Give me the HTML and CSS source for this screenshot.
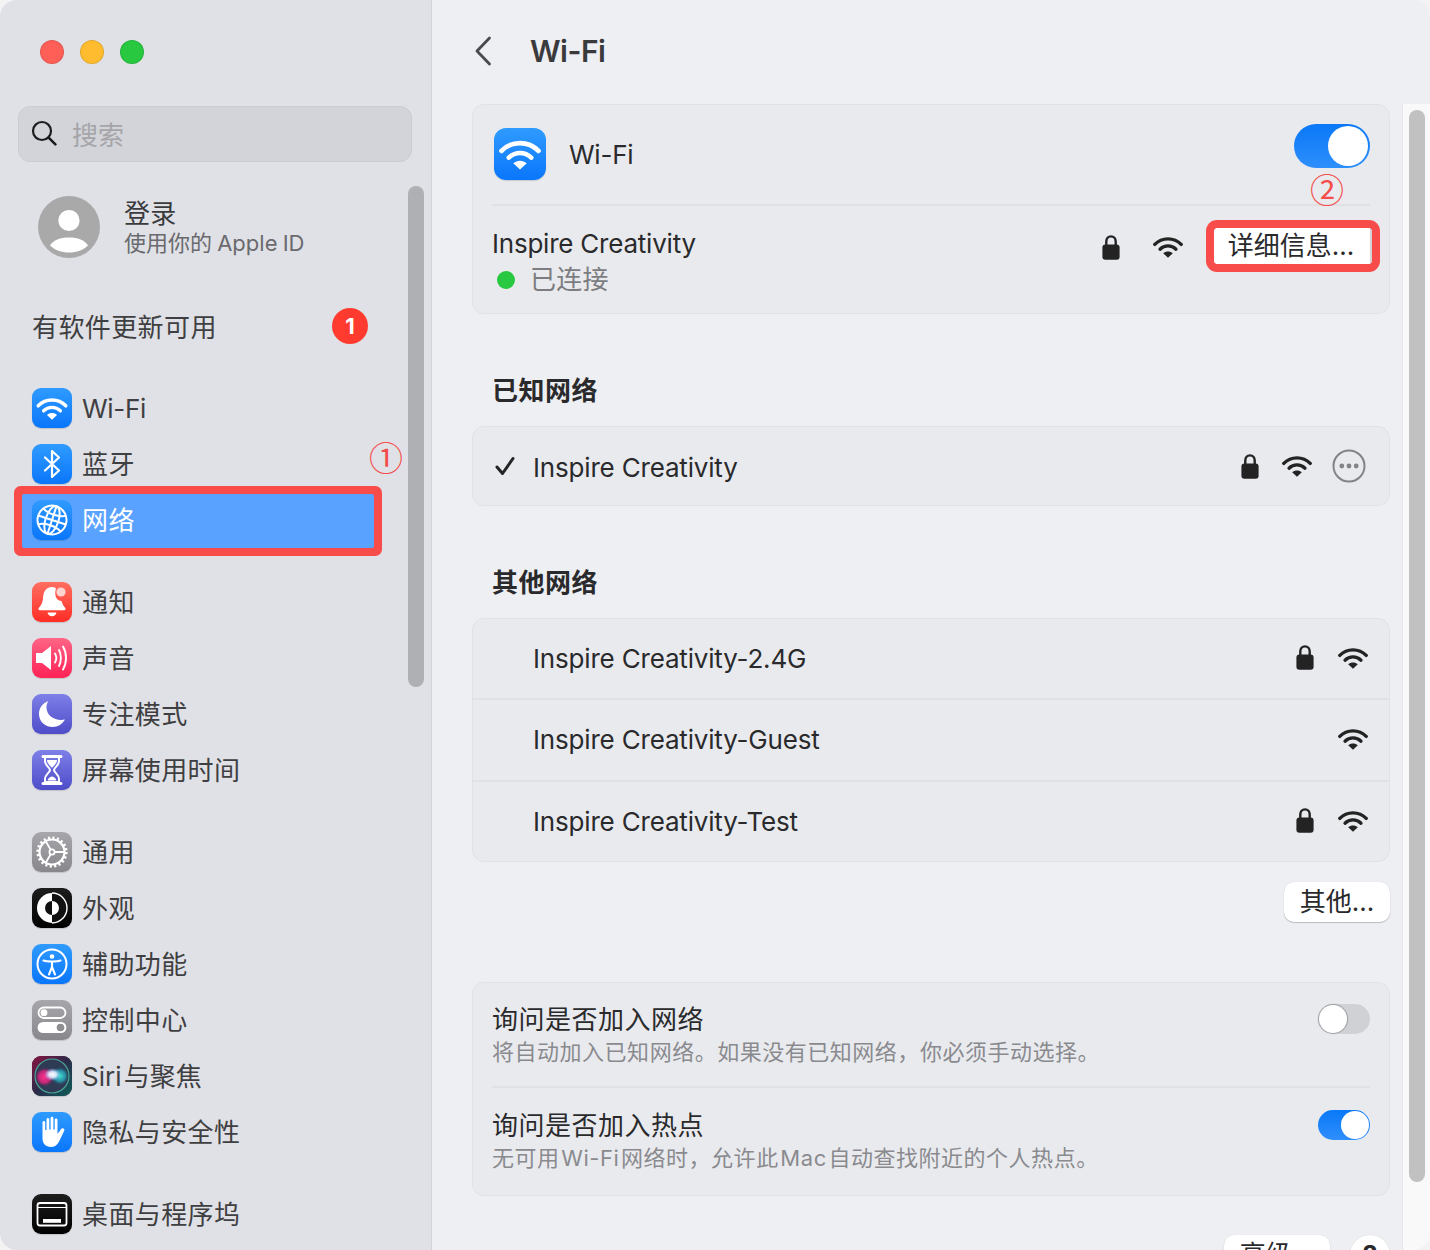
FILE: index.html
```html
<!DOCTYPE html>
<html lang="zh-CN">
<head>
<meta charset="utf-8">
<title>Wi-Fi</title>
<link rel="stylesheet" href="styles.css">
</head>
<body>
<svg class="defs" width="0" height="0" aria-hidden="true">
  <defs>
    <symbol id="wifi" viewBox="0 0 30 22">
      <path d="M1.8 8.4C9 1 21 1 28.2 8.4" fill="none" stroke="currentColor" stroke-width="3.4" stroke-linecap="round"/>
      <path d="M7 13.2C11.5 8.8 18.5 8.8 23 13.2" fill="none" stroke="currentColor" stroke-width="3.3" stroke-linecap="round"/>
      <path d="M15 21.8L10.2 17.2C13 14.800 17 14.800 19.800 17.2Z" fill="currentColor"/>
    </symbol>
    <symbol id="lock" viewBox="0 0 18 25">
      <path d="M4.3 11V6.6C4.3 3.6 6.2 1.4 9 1.4S13.7 3.6 13.7 6.6V11" fill="none" stroke="currentColor" stroke-width="2.4"/>
      <rect x="0.4" y="9.6" width="17.2" height="15.2" rx="3" fill="currentColor"/>
    </symbol>
    <radialGradient id="siriA" cx=".5" cy=".5" r=".5"><stop offset="0" stop-color="#fff"/><stop offset=".45" stop-color="#e4efff" stop-opacity=".9"/><stop offset="1" stop-color="#7fb4ff" stop-opacity="0"/></radialGradient>
    <radialGradient id="siriB" cx=".5" cy=".5" r=".5"><stop offset="0" stop-color="#ff2f8e"/><stop offset=".6" stop-color="#e0267f" stop-opacity=".85"/><stop offset="1" stop-color="#a0185f" stop-opacity="0"/></radialGradient>
    <radialGradient id="siriC" cx=".5" cy=".5" r=".5"><stop offset="0" stop-color="#3fe0cc"/><stop offset=".6" stop-color="#2a9fb5" stop-opacity=".85"/><stop offset="1" stop-color="#116a70" stop-opacity="0"/></radialGradient>
    <linearGradient id="siriBg" x1="0" y1="0" x2="1" y2="1"><stop offset="0" stop-color="#8a1240"/><stop offset=".5" stop-color="#2b2a4a"/><stop offset="1" stop-color="#0c5f5a"/></linearGradient>
  </defs>
</svg>

<div class="window">
  <aside class="sidebar">
    <div class="lights">
      <span class="light light-red"></span>
      <span class="light light-yellow"></span>
      <span class="light light-green"></span>
    </div>
    <div class="search">
      <svg class="search-icon" viewBox="0 0 26 26"><circle cx="11" cy="11" r="9" fill="none" stroke="#1d1d1f" stroke-width="2.2"/><path d="M17.6 17.6L24.4 24.4" stroke="#1d1d1f" stroke-width="2.6" stroke-linecap="round"/></svg>
      <span class="search-text">搜索</span>
    </div>
    <div class="account">
      <svg class="avatar" viewBox="0 0 62 62"><circle cx="31" cy="31" r="31" fill="#a9a9a9"/><circle cx="31" cy="24.5" r="10.6" fill="#fff"/><path d="M12 49.500C15.500 44 22 41.500 31 41.500S46.500 44 50 49.500C45.500 54 38.500 56.500 31 56.500S16.500 54 12 49.500Z" fill="#fff"/></svg>
      <div class="account-text">
        <div class="account-name">登录</div>
        <div class="account-sub">使用你的 Apple ID</div>
      </div>
    </div>
    <div class="update">
      <span class="update-text">有软件更新可用</span>
      <span class="update-badge">1</span>
    </div>

    <nav class="nav-group">
      <div class="nav-item">
        <span class="tile tile-blue"><svg class="glyph-wifi" viewBox="0 0 30 22"><use href="#wifi"/></svg></span><span class="latin">Wi-Fi</span>
      </div>
      <div class="nav-item">
        <span class="tile tile-blue"><svg class="glyph" viewBox="0 0 40 40"><path d="M13 13.500L27 26.500L20 33V7L27 13.500L13 26.500" fill="none" stroke="#fff" stroke-width="2.2" stroke-linejoin="round" stroke-linecap="round"/></svg></span><span>蓝牙</span>
      </div>
      <div class="nav-item nav-item-selected">
        <span class="tile tile-blue"><svg class="glyph" viewBox="0 0 40 40"><g fill="none" stroke="#fff" stroke-width="2" transform="rotate(18 20 20)"><circle cx="20" cy="20" r="14.500"/><ellipse cx="20" cy="20" rx="6.500" ry="14.500"/><path d="M20 5.500V34.500"/><path d="M8 11.500C14 15.500 26 15.500 32 11.500"/><path d="M5.500 20H34.500"/><path d="M8 28.500C14 24.500 26 24.500 32 28.500"/></g></svg></span><span>网络</span>
      </div>
    </nav>

    <nav class="nav-group">
      <div class="nav-item">
        <span class="tile tile-red"><svg class="glyph" viewBox="0 0 40 40"><path d="M20 5C13.500 5 11.500 10 11 16C10.600 21 9 23.500 6.800 25.800C6 26.700 6.400 28.200 8 28.200H32C33.600 28.200 34 26.700 33.200 25.800C31.500 24 30.300 22 29.500 19C25 19 21.600 14 24 6.500C22.900 5.500 21.500 5 20 5Z" fill="#fff"/><path d="M15.500 30.600H24.500C24 33 22.300 34.200 20 34.200S16 33 15.500 30.600Z" fill="#fff"/><circle cx="29" cy="10" r="4.600" fill="#ffd3cf"/></svg></span><span>通知</span>
      </div>
      <div class="nav-item">
        <span class="tile tile-pink"><svg class="glyph" viewBox="0 0 40 40"><path d="M4 15H10L19 8V32L10 25H4Z" fill="#fff"/><g fill="none" stroke="#fff" stroke-width="1.900" stroke-linecap="round"><path d="M23 15.500C24.500 18 24.500 22 23 24.500"/><path d="M27 12C29.500 16.500 29.500 23.500 27 28"/><path d="M31 8.500C35 15 35 25 31 31.500"/></g></svg></span><span>声音</span>
      </div>
      <div class="nav-item">
        <span class="tile tile-indigo"><svg class="glyph" viewBox="0 0 40 40"><path d="M16.500 7C10.500 9 7 14 7 20C7 27.500 13 33 20.500 33C26 33 30.500 30 33 25.500C24 27.500 15 22.500 14.500 14C14.300 11.500 15 9 16.500 7Z" fill="#fff"/></svg></span><span>专注模式</span>
      </div>
      <div class="nav-item">
        <span class="tile tile-indigo"><svg class="glyph" viewBox="0 0 40 40"><path d="M11 6.500H29M11 33.500H29" stroke="#fff" stroke-width="3" stroke-linecap="round"/><path d="M13 8V11C13 15.500 18 17.500 18 20C18 22.500 13 24.500 13 29V32H27V29C27 24.500 22 22.500 22 20C22 17.500 27 15.500 27 11V8" fill="none" stroke="#fff" stroke-width="2"/><path d="M15 10H25C25 14 21 16 20 18C19 16 15 14 15 10Z" fill="#fff"/><path d="M15.500 30.500C16 28 19 26.500 20 26.500S24 28 24.500 30.500Z" fill="#fff"/></svg></span><span>屏幕使用时间</span>
      </div>
    </nav>

    <nav class="nav-group">
      <div class="nav-item">
        <span class="tile tile-gray"><svg class="glyph" viewBox="0 0 40 40"><g fill="none" stroke="#fff"><circle cx="20" cy="20" r="12.500" stroke-width="2.200"/><circle cx="20" cy="20" r="14.300" stroke-width="2.600" stroke-dasharray="2.200 2.290"/><circle cx="20" cy="20" r="2.600" stroke-width="1.800"/><path d="M22.600 20H32.500M18.700 17.800L13.700 9.200M18.700 22.200L13.700 30.800" stroke-width="1.800"/></g></svg></span><span>通用</span>
      </div>
      <div class="nav-item">
        <span class="tile tile-black"><svg class="glyph" viewBox="0 0 40 40"><circle cx="20" cy="20" r="15" fill="#fff"/><path d="M20 5A15 15 0 0 1 20 35Z" fill="#111"/><path d="M20 5A15 15 0 0 1 20 35" fill="none" stroke="#fff" stroke-width="1.400"/><path d="M20 13A7 7 0 0 0 20 27Z" fill="#111"/><path d="M20 13A7 7 0 0 1 20 27Z" fill="#fff"/></svg></span><span>外观</span>
      </div>
      <div class="nav-item">
        <span class="tile tile-blue"><svg class="glyph" viewBox="0 0 40 40"><circle cx="20" cy="20" r="14.500" fill="none" stroke="#fff" stroke-width="2"/><circle cx="20" cy="12.500" r="2.300" fill="#fff"/><path d="M11.500 16.500C15 17.800 25 17.800 28.500 16.500M20 17.500V23M20 23L17 30.500M20 23L23 30.500" fill="none" stroke="#fff" stroke-width="2.100" stroke-linecap="round"/></svg></span><span>辅助功能</span>
      </div>
      <div class="nav-item">
        <span class="tile tile-gray"><svg class="glyph" viewBox="0 0 40 40"><rect x="6.500" y="7.500" width="27" height="10.500" rx="5.200" fill="none" stroke="#fff" stroke-width="1.800"/><circle cx="12" cy="12.700" r="3.400" fill="#fff"/><rect x="5.600" y="22" width="28.800" height="11" rx="5.500" fill="#fff"/><circle cx="28.500" cy="27.500" r="3.800" fill="#8e8e92"/></svg></span><span>控制中心</span>
      </div>
      <div class="nav-item">
        <span class="tile tile-siri"><svg class="glyph-full" viewBox="0 0 40 40"><rect width="40" height="40" fill="url(#siriBg)"/><circle cx="20" cy="20" r="17" fill="#2f3a55" stroke="#4aa596" stroke-width="1.200"/><circle cx="12.500" cy="21" r="9.500" fill="url(#siriB)"/><circle cx="28" cy="20" r="9" fill="url(#siriC)"/><ellipse cx="20.500" cy="18.500" rx="8.500" ry="6.500" fill="url(#siriA)"/></svg></span><span class="siri-label">Siri 与聚焦</span>
      </div>
      <div class="nav-item">
        <span class="tile tile-blue"><svg class="glyph" viewBox="0 0 40 40"><path d="M10.500 10.500C10.500 8.500 13.200 8.500 13.200 10.500V18H14.500V7.500C14.500 5.500 17.300 5.500 17.300 7.500V17.500H18.600V6.200C18.600 4.200 21.400 4.200 21.400 6.200V17.500H22.700V8C22.700 6 25.500 6 25.500 8V22C27 20.200 28.200 18 29.500 16.800C31 15.500 33.200 17 32.200 18.800C30.500 22 28.700 27 26.500 30.500C24.700 33.500 22 35 19 35C13.500 35 10.500 31.500 10.500 26Z" fill="#fff"/></svg></span><span>隐私与安全性</span>
      </div>
    </nav>

    <nav class="nav-group">
      <div class="nav-item">
        <span class="tile tile-black"><svg class="glyph" viewBox="0 0 40 40"><rect x="5.500" y="9" width="29" height="22.500" rx="2.500" fill="none" stroke="#fff" stroke-width="1.800"/><path d="M6 13.500H34" stroke="#fff" stroke-width="1.200"/><rect x="11" y="25" width="18" height="3.800" fill="#fff"/></svg></span><span>桌面与程序坞</span>
      </div>
    </nav>

    <div class="side-thumb"></div>
    <span class="note note-one">①</span>
  </aside>

  <main class="main">
    <header class="header">
      <svg class="back" viewBox="0 0 18 30"><path d="M15.500 2L3 15L15.500 28" fill="none" stroke="#4a4a4d" stroke-width="2.800" stroke-linecap="round" stroke-linejoin="round"/></svg>
      <h1 class="title">Wi-Fi</h1>
    </header>
    <div class="body">
      <div class="content">
        <section class="card">
          <div class="wifi-head">
            <span class="tile tile-large tile-blue"><svg class="glyph-wifi-large" viewBox="0 0 30 22"><use href="#wifi"/></svg></span>
            <span class="row-label">Wi-Fi</span>
            <span class="toggle toggle-large toggle-on"><span class="knob"></span></span>
          </div>
          <div class="divider"></div>
          <div class="connected">
            <div class="connected-text">
              <div class="net-name">Inspire Creativity</div>
              <div class="net-status"><span class="dot"></span>已连接</div>
            </div>
            <div class="connected-tools">
              <svg class="ic-lock"><use href="#lock"/></svg>
              <svg class="ic-wifi"><use href="#wifi"/></svg>
              <button class="btn btn-detail">详细信息...</button>
            </div>
          </div>
        </section>

        <h2 class="section-title">已知网络</h2>
        <section class="card">
          <div class="net-row known">
            <svg class="check" viewBox="0 0 20 20"><path d="M2 11L7.500 17.500L18 2.500" fill="none" stroke="#242424" stroke-width="3" stroke-linecap="round" stroke-linejoin="round"/></svg>
            <span class="net-label">Inspire Creativity</span>
            <svg class="ic-lock"><use href="#lock"/></svg>
            <svg class="ic-wifi"><use href="#wifi"/></svg>
            <svg class="more" viewBox="0 0 34 34"><circle cx="17" cy="17" r="15.500" fill="none" stroke="#838386" stroke-width="2"/><circle cx="9.800" cy="17" r="2.400" fill="#838386"/><circle cx="17" cy="17" r="2.400" fill="#838386"/><circle cx="24.200" cy="17" r="2.400" fill="#838386"/></svg>
          </div>
        </section>

        <h2 class="section-title">其他网络</h2>
        <section class="card">
          <div class="net-row other other-edge">
            <span class="net-label net-indent">Inspire Creativity-2.4G</span>
            <svg class="ic-lock"><use href="#lock"/></svg>
            <svg class="ic-wifi"><use href="#wifi"/></svg>
          </div>
          <div class="divider divider-full"></div>
          <div class="net-row other">
            <span class="net-label net-indent">Inspire Creativity-Guest</span>
            <svg class="ic-wifi"><use href="#wifi"/></svg>
          </div>
          <div class="divider divider-full"></div>
          <div class="net-row other other-edge">
            <span class="net-label net-indent">Inspire Creativity-Test</span>
            <svg class="ic-lock"><use href="#lock"/></svg>
            <svg class="ic-wifi"><use href="#wifi"/></svg>
          </div>
        </section>

        <div class="other-row"><button class="btn btn-plain">其他...</button></div>

        <section class="card card-options">
          <div class="option">
            <div class="option-text">
              <div class="option-title">询问是否加入网络</div>
              <div class="option-sub">将自动加入已知网络。如果没有已知网络，你必须手动选择。</div>
            </div>
            <span class="toggle"><span class="knob"></span></span>
          </div>
          <div class="divider"></div>
          <div class="option option-second">
            <div class="option-text">
              <div class="option-title">询问是否加入热点</div>
              <div class="option-sub option-sub-mixed">无可用 Wi-Fi 网络时，允许此 Mac 自动查找附近的个人热点。</div>
            </div>
            <span class="toggle toggle-on"><span class="knob"></span></span>
          </div>
        </section>

        <div class="footer-row">
          <button class="btn btn-plain">高级...</button>
          <button class="btn btn-help">?</button>
        </div>
      </div>
      <div class="track"><div class="track-thumb"></div></div>
    </div>
    <span class="note note-two">②</span>
  </main>
</div>
</body>
</html>
```

FILE: styles.css
```css
* { box-sizing: border-box; }
html, body { margin: 0; padding: 0; }
body {
  width: 1430px;
  height: 1250px;
  overflow: hidden;
  background: #f3f3f4;
  font-family: "Inter", "Noto Sans CJK SC", sans-serif;
  line-height: 30px;
  color: #2a2a2c;
}
.defs { position: absolute; }

.window {
  display: flex;
  width: 1430px;
  height: 1250px;
  border-radius: 17px;
  overflow: hidden;
  background: #eeeff3;
}

/* Sidebar */
.sidebar {
  position: relative;
  flex: none;
  width: 432px;
  height: 1250px;
  overflow: hidden;
  padding-top: 40px;
  background: #e0e1e6;
  border-right: 1px solid #d3d4d8;
}
.lights { display: flex; gap: 16px; padding-left: 40px; height: 24px; }
.light { width: 24px; height: 24px; border-radius: 50%; border: 1px solid rgba(0,0,0,.1); }
.light-red { background: #ff5f57; }
.light-yellow { background: #febc2e; }
.light-green { background: #28c840; }

.search {
  display: flex;
  align-items: center;
  margin: 42px 0 0 18px;
  width: 394px;
  height: 56px;
  padding: 0 0 2px 12px;
  border-radius: 12px;
  background: #d3d4d9;
  border: 1px solid #cbccd1;
}
.search-icon { width: 26px; height: 26px; flex: none; }
.search-text { margin: 6px 0 0 15px; font-size: 26px; color: #a5a5a9; }

.account { display: flex; align-items: center; margin: 34px 0 0 38px; height: 62px; gap: 24px; }
.avatar { width: 62px; height: 62px; flex: none; }
.account-name { font-size: 26px; line-height: 30px; padding-top: 1px; color: #3b3b3e; letter-spacing: .3px; }
.account-sub { font-size: 22px; line-height: 28px; color: #6a6a6e; word-spacing: -1px; }

.update { display: flex; align-items: center; margin-top: 48px; height: 40px; padding-left: 32px; }
.update-text { padding-top: 3px; font-size: 26px; letter-spacing: .4px; color: #3f3f42; width: 300px; }
.update-badge {
  width: 36px; height: 36px; border-radius: 50%;
  background: #ff3b30; color: #fff;
  font-size: 22px; font-weight: 700; line-height: 36px; text-align: center;
}

.nav-group { margin-top: 26px; }
.update + .nav-group { margin-top: 34px; }
.nav-item {
  position: relative;
  isolation: isolate;
  display: flex;
  align-items: center;
  gap: 10px;
  height: 56px;
  margin-left: 22px;
  width: 352px;
  padding-left: 10px;
  font-size: 26px;
  letter-spacing: .4px;
  color: #3f3f42;
}
.nav-item > span:last-child { padding-top: 2px; }
.nav-item .latin { letter-spacing: -.3px; }
.nav-item .siri-label { letter-spacing: 0; word-spacing: -5px; }
.nav-item-selected { color: #fff; }
.nav-item-selected::before {
  content: "";
  position: absolute;
  z-index: -1;
  inset: 2px 0 0 0;
  background: #5aa2ff;
  border-radius: 2px;
  box-shadow: 0 0 0 8px #f84c4a;
}

.tile {
  display: flex;
  align-items: center;
  justify-content: center;
  flex: none;
  width: 40px;
  height: 40px;
  border-radius: 9px;
  overflow: hidden;
  color: #fff;
  box-shadow: 0 1px 1px rgba(0,0,0,.14);
}
.tile-large { width: 52px; height: 52px; border-radius: 12px; margin-top: -1px; }
.tile-blue { background: linear-gradient(#2f9bff, #0a76fb); }
.tile-red { background: linear-gradient(#ff6f61, #ff2d26); }
.tile-pink { background: linear-gradient(#ff6585, #ff2257); }
.tile-indigo { background: linear-gradient(#7f7fe8, #4e4cc8); }
.tile-gray { background: linear-gradient(#a7a7ab, #88888c); }
.tile-black { background: linear-gradient(#1d1d1d, #000); }
.tile-siri { background: #222; }
.glyph { width: 40px; height: 40px; }
.glyph-full { width: 40px; height: 40px; display: block; }
.glyph-wifi { width: 32px; height: 23px; color: #fff; }
.glyph-wifi-large { width: 42px; height: 31px; color: #fff; }

.side-thumb {
  position: absolute;
  left: 408px; top: 186px;
  width: 16px; height: 501px;
  border-radius: 8px;
  background: #afb0b4;
}
.note {
  position: absolute;
  color: #f44d4b;
  font-family: "Noto Sans CJK SC", sans-serif;
  font-size: 34px;
  font-weight: 400;
  line-height: 40px;
}
.note-one { left: 369px; top: 437px; }
.note-two { left: 1310px; top: 169px; }

/* Main */
.main { flex: none; width: 998px; height: 1250px; display: flex; flex-direction: column; }
.header { flex: none; height: 104px; display: flex; align-items: center; padding-left: 42px; }
.back { width: 18px; height: 30px; flex: none; margin-top: -2px; }
.title { margin: -2px 0 0 38px; font-size: 30px; font-weight: 600; letter-spacing: -.5px; color: #3a3a3d; }

.body { flex: none; height: 1146px; display: flex; overflow: hidden; }
.content { flex: none; width: 970px; padding: 0 12px 0 40px; }
.track {
  flex: none;
  width: 28px;
  padding: 6px 0 0 6px;
  background: #f9f9f9;
  border-left: 1px solid #e6e7ea;
}
.track-thumb { width: 16px; height: 1072px; border-radius: 8px; background: #c1c1c1; }

.card {
  background: #e9eaee;
  border: 1px solid #e1e2e6;
  border-radius: 12px;
}
.wifi-head { display: flex; align-items: center; height: 99px; padding: 0 19px 0 21px; }
.row-label { flex: 1; margin-left: 23px; font-size: 26px; letter-spacing: -.25px; }
.toggle {
  position: relative;
  display: block;
  flex: none;
  width: 52px;
  height: 30px;
  border-radius: 15px;
  background: #d0d1d5;
}
.toggle-on { background: linear-gradient(#0a78f8, #2e8ffb); }
.knob {
  position: absolute;
  left: 1px; top: 1px;
  width: 28px; height: 28px;
  border-radius: 50%;
  background: #fff;
  box-shadow: 0 0 1px 1px rgba(0,0,0,.25);
}
.toggle-on .knob { left: auto; right: 1px; box-shadow: none; }
.toggle-large { width: 76px; height: 44px; border-radius: 22px; margin-top: -17px; }
.toggle-large .knob { width: 40px; height: 40px; top: 2px; right: 2px; }

.divider { height: 2px; margin: 0 19px 0 19px; background: #e0e1e5; }
.divider-full { margin: 0; }

.connected { display: flex; height: 107px; padding: 20px 17px 0 19px; justify-content: space-between; }
.net-name { font-size: 26px; line-height: 36px; letter-spacing: -.22px; }
.net-status { display: flex; align-items: center; font-size: 26px; line-height: 36px; color: #7d7d81; letter-spacing: .3px; }
.dot { width: 18px; height: 18px; border-radius: 50%; background: #28c840; margin: 0 15px 0 5px; }
.connected-tools { display: flex; align-items: flex-start; margin-top: 2px; }
.connected-tools .ic-lock { margin: 7px 33px 0 0; }
.connected-tools .ic-wifi { margin: 8px 31px 0 0; }

.ic-lock { width: 18px; height: 25px; color: #232323; flex: none; }
.ic-wifi { width: 30px; height: 22px; color: #232323; flex: none; }

.btn {
  display: block;
  border: 0;
  padding: 0;
  font: inherit;
  font-size: 26px;
  color: #2a2a2c;
  background: #fff;
  text-align: center;
}
.btn-detail {
  width: 158px;
  height: 36px;
  line-height: 34px;
  padding-right: 4px;
  border-radius: 4px;
  background: linear-gradient(90deg, #fff 156px, #d3d3d5 156px);
  box-shadow: 0 0 0 8px #f84c4a;
}
.btn-plain {
  width: 106px;
  height: 40px;
  line-height: 38px;
  border-radius: 10px;
  box-shadow: 0 1px 1px rgba(0,0,0,.2), 0 0 1px rgba(0,0,0,.15);
}
.btn-help {
  width: 40px;
  height: 40px;
  border-radius: 50%;
  font-weight: 700;
  box-shadow: 0 1px 1px rgba(0,0,0,.2), 0 0 1px rgba(0,0,0,.15);
}

.section-title {
  margin: 51px 0 9px 20px;
  font-size: 26px;
  line-height: 52px;
  font-weight: 700;
  letter-spacing: .5px;
  color: #2a2a2c;
}

.net-row { display: flex; align-items: center; height: 78px; padding: 0 23px 0 0; gap: 22px; }
.net-row .net-label { flex: 1; font-size: 26px; letter-spacing: -.18px; }
.net-row.other { height: 80px; padding-right: 21px; gap: 24px; }
.net-row.other-edge { height: 79px; }
.net-row.other svg { margin-bottom: 2px; }
.net-indent { margin-left: 60px; }
.known { padding-left: 22px; }
.known .net-label { margin-left: -4px; padding-top: 4px; }
.known .ic-lock { margin-right: 1px; }
.known .ic-wifi { margin-right: -2px; }
.check { width: 20px; height: 20px; flex: none; }
.more { width: 34px; height: 34px; flex: none; }

.other-row { display: flex; justify-content: flex-end; margin-top: 20px; }
.card-options { margin-top: 60px; }
.option { display: flex; align-items: flex-start; justify-content: space-between; height: 103px; padding: 20px 19px 0 19px; }
.option-second { height: 107px; padding-top: 21px; }
.option .toggle { margin-top: 1px; }
.option-second .toggle { margin-top: 1px; }
.option-title { font-size: 26px; line-height: 33px; letter-spacing: .5px; }
.option-sub { font-size: 22px; line-height: 33px; letter-spacing: .52px; color: #8a8a8e; }
.option-sub-mixed { word-spacing: -5px; }

.footer-row { display: flex; justify-content: flex-end; gap: 20px; margin-top: 39px; }
```
